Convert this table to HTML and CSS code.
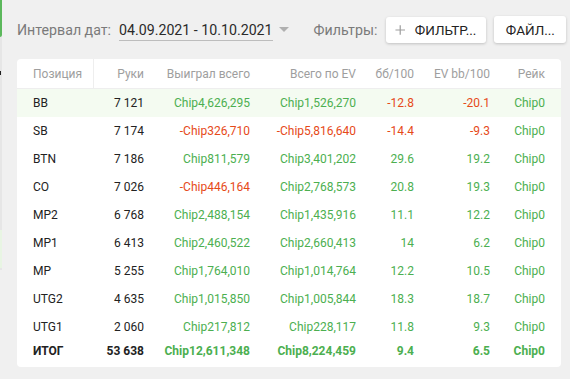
FILE: index.html
```html
<!DOCTYPE html>
<html lang="ru">
<head>
<meta charset="utf-8">
<link rel="stylesheet" href="styles.css">
</head>
<body>
<div class="page">
  <div class="edge">
    <div class="edge-green"></div>
    <div class="edge-grey"><span class="edge-tick"></span><span class="edge-light"></span></div>
  </div>
  <div class="main">
    <div class="toolbar">
      <span class="label">Интервал дат:</span>
      <span class="date">04.09.2021 - 10.10.2021</span>
      <span class="caret"></span>
      <span class="label filters">Фильтры:</span>
      <button class="btn btn-add"><svg width="12" height="12" viewBox="0 0 12 12"><path d="M6 0.5V11.5M0.5 6H11.5" stroke="#9e9e9e" stroke-width="1.4"/></svg>ФИЛЬТР...</button>
      <button class="btn btn-file">ФАЙЛ...</button>
    </div>
    <div class="card">
      <table class="stats">
        <colgroup>
          <col class="c1"><col class="c2"><col class="c3"><col class="c4"><col class="c5"><col class="c6"><col class="c7">
        </colgroup>
        <thead>
          <tr><th class="first">Позиция</th><th>Руки</th><th>Выиграл всего</th><th>Всего по EV</th><th>бб/100</th><th>EV bb/100</th><th>Рейк</th></tr>
        </thead>
        <tbody>
          <tr class="hl"><td class="pos">BB</td><td>7 121</td><td class="g">Chip4,626,295</td><td class="g">Chip1,526,270</td><td class="r">-12.8</td><td class="r">-20.1</td><td class="g">Chip0</td></tr>
          <tr><td class="pos">SB</td><td>7 174</td><td class="r">-Chip326,710</td><td class="r">-Chip5,816,640</td><td class="r">-14.4</td><td class="r">-9.3</td><td class="g">Chip0</td></tr>
          <tr><td class="pos">BTN</td><td>7 186</td><td class="g">Chip811,579</td><td class="g">Chip3,401,202</td><td class="g">29.6</td><td class="g">19.2</td><td class="g">Chip0</td></tr>
          <tr><td class="pos">CO</td><td>7 026</td><td class="r">-Chip446,164</td><td class="g">Chip2,768,573</td><td class="g">20.8</td><td class="g">19.3</td><td class="g">Chip0</td></tr>
          <tr><td class="pos">MP2</td><td>6 768</td><td class="g">Chip2,488,154</td><td class="g">Chip1,435,916</td><td class="g">11.1</td><td class="g">12.2</td><td class="g">Chip0</td></tr>
          <tr><td class="pos">MP1</td><td>6 413</td><td class="g">Chip2,460,522</td><td class="g">Chip2,660,413</td><td class="g">14</td><td class="g">6.2</td><td class="g">Chip0</td></tr>
          <tr><td class="pos">MP</td><td>5 255</td><td class="g">Chip1,764,010</td><td class="g">Chip1,014,764</td><td class="g">12.2</td><td class="g">10.5</td><td class="g">Chip0</td></tr>
          <tr><td class="pos">UTG2</td><td>4 635</td><td class="g">Chip1,015,850</td><td class="g">Chip1,005,844</td><td class="g">18.3</td><td class="g">18.7</td><td class="g">Chip0</td></tr>
          <tr><td class="pos">UTG1</td><td>2 060</td><td class="g">Chip217,812</td><td class="g">Chip228,117</td><td class="g">11.8</td><td class="g">9.3</td><td class="g">Chip0</td></tr>
        </tbody>
        <tfoot>
          <tr><td class="pos">ИТОГ</td><td>53 638</td><td class="g">Chip12,611,348</td><td class="g">Chip8,224,459</td><td class="g">9.4</td><td class="g">6.5</td><td class="g">Chip0</td></tr>
        </tfoot>
      </table>
    </div>
  </div>
</div>
</body>
</html>
```

FILE: styles.css
```css
html, body {
  margin: 0;
  padding: 0;
  background: #f0f0f0;
  font-family: Roboto, "Noto Sans", sans-serif;
  width: 570px;
  height: 379px;
  overflow: hidden;
}

.page {
  display: flex;
  height: 379px;
}

.edge {
  width: 2px;
  flex-shrink: 0;
  display: flex;
  flex-direction: column;
}

.edge-green {
  height: 37px;
  background: #5cb85c;
  border-bottom-right-radius: 2px;
}

.edge-grey {
  height: 233px;
  background: #e6e6e6;
  display: flex;
  flex-direction: column;
}

.edge-tick {
  display: block;
  height: 4px;
  width: 1px;
  margin-top: 34px;
  background: #222;
}

.edge-light {
  display: block;
  height: 38px;
  margin-top: 155px;
  background: #e8f5e3;
}

.main {
  flex: 1;
  min-width: 0;
  padding: 16px 0 0 15px;
}

.toolbar {
  display: flex;
  align-items: center;
  height: 27px;
  font-size: 14.2px;
  white-space: nowrap;
}

.toolbar > * {
  flex-shrink: 0;
}

.label {
  color: #7a7a7a;
}

.date {
  margin-left: 8px;
  color: #2a2a2a;
  border-bottom: 1px solid #bdbdbd;
  line-height: 20px;
  padding-top: 1px;
}

.caret {
  width: 0;
  height: 0;
  margin-left: 6px;
  border-left: 5px solid transparent;
  border-right: 5px solid transparent;
  border-top: 5px solid #b0b0b0;
}

.filters {
  margin-left: 25px;
}

.btn {
  font-family: Roboto, "Noto Sans", sans-serif;
  font-size: 13.5px;
  color: #222;
  background: #fff;
  border: 0;
  border-radius: 3px;
  box-shadow: 0 1px 3px rgba(0, 0, 0, 0.2);
  height: 26px;
  display: flex;
  align-items: center;
  padding: 0 10px;
  white-space: nowrap;
}

.btn-add {
  margin-left: 9px;
  width: 100px;
  gap: 9px;
  padding-left: 9px;
}

.btn-file {
  margin-left: 8px;
  width: 72px;
  height: 27px;
  justify-content: center;
}

.card {
  margin-top: 16px;
  width: 544px;
  background: #fff;
  border-radius: 4px;
  padding-bottom: 6px;
  overflow: hidden;
}

.stats {
  width: 544px;
  border-collapse: collapse;
  table-layout: fixed;
  font-size: 12px;
}

.c1 { width: 76px; }
.c2 { width: 67px; }
.c3 { width: 106px; }
.c4 { width: 106px; }
.c5 { width: 58px; }
.c6 { width: 76px; }
.c7 { width: 55px; }

.stats th {
  height: 29px;
  padding: 0 16px 0 0;
  font-weight: 400;
  color: #9e9e9e;
  text-align: right;
  border-bottom: 1px solid #eeeeee;
  white-space: nowrap;
}

.stats th.first {
  text-align: left;
  padding-left: 16px;
  border-right: 1px solid #eeeeee;
}

.stats td {
  height: 28px;
  line-height: 14px;
  padding: 0 16px 0 0;
  text-align: right;
  color: #222;
  white-space: nowrap;
}

.stats td.pos {
  text-align: left;
  padding-left: 16px;
}

.stats tr.hl td {
  background: #f4fbf1;
}

.stats tfoot td {
  height: 20px;
  font-weight: 700;
}

.stats td.g { color: #4caf50; }
.stats td.r { color: #e64a19; }
```
